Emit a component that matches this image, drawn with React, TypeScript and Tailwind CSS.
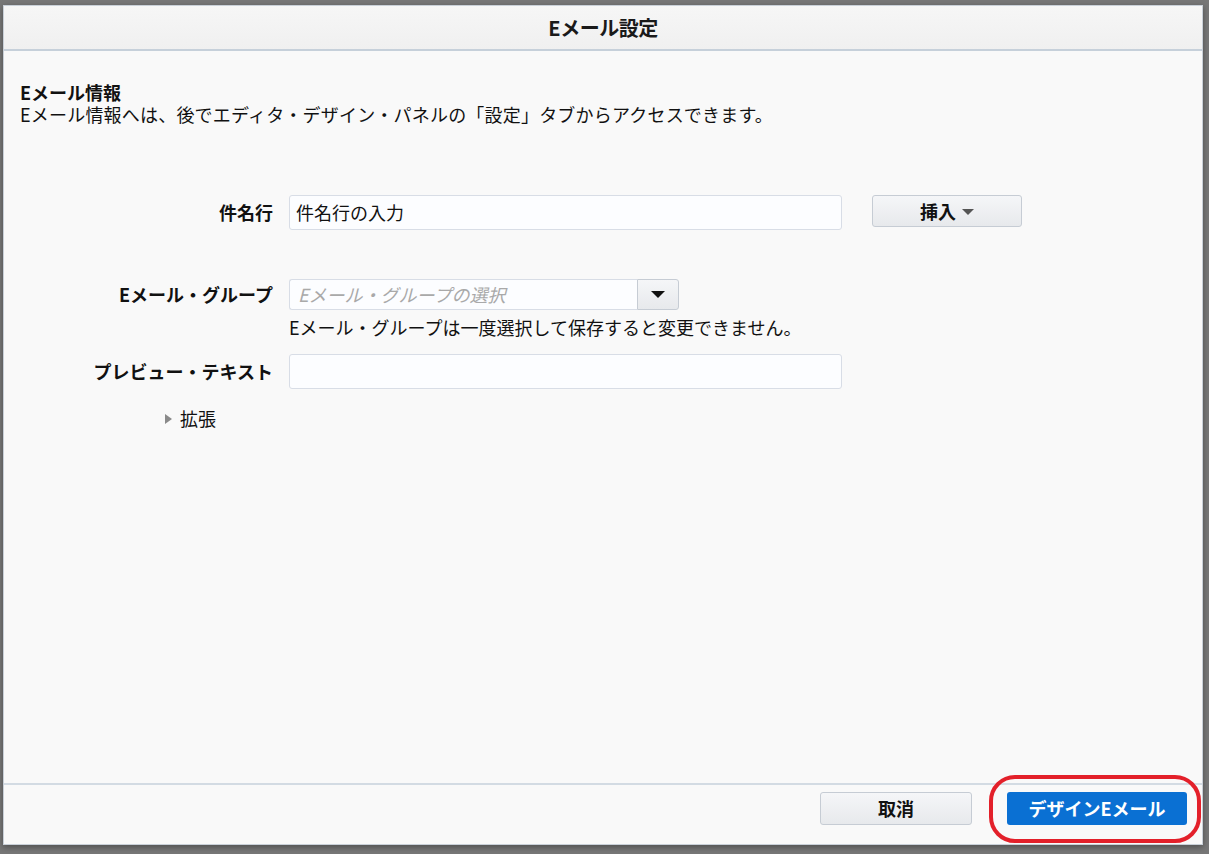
import React from 'react';

const font = "font-['Noto_Sans_CJK_JP','Noto_Sans',sans-serif]";

const GreyButton: React.FC<{ className?: string; children: React.ReactNode }> = ({ className = '', children }) => (
  <button
    className={`flex items-center justify-center rounded-[3px] border border-[#c6ccd4] bg-gradient-to-b from-[#f5f6f8] to-[#e7e9ec] text-[18px] font-bold text-[#111] ${className}`}
  >
    {children}
  </button>
);

const App: React.FC = () => {
  return (
    <div className={`${font} flex h-[854px] w-[1209px] bg-[#777777] pl-[3px] pt-[5px] text-[#111]`}>
      <div className="relative flex h-[840px] w-[1200px] flex-col border border-[#c9d0d8] bg-[#f9f9f9] shadow-[0_2px_6px_rgba(0,0,0,0.35)]">
        {/* Header */}
        <div className="flex h-[45px] shrink-0 items-center justify-center border-b-2 border-[#c6d0da] bg-gradient-to-b from-[#f6f6f6] to-[#f0f0f0]">
          <h1 className="text-[20px] font-bold tracking-tight text-[#1a1a1a]">Eメール設定</h1>
        </div>

        {/* Body */}
        <div className="flex-1 px-[16px] pt-[31px]">
          <h2 className="text-[18px] font-bold leading-[21px]">Eメール情報</h2>
          <p className="text-[18px] leading-[22px] tracking-[0.2px]">
            Eメール情報へは、後でエディタ・デザイン・パネルの「設定」タブからアクセスできます。
          </p>

          <div className="mt-[70px] flex flex-col">
            {/* Subject */}
            <div className="flex items-start">
              <label className="flex h-[35px] w-[253px] items-center justify-end text-[18px] font-bold">件名行</label>
              <div className="ml-[16px] flex h-[35px] w-[553px] items-center rounded-[3px] border border-[#d8dde6] bg-[#fcfdff] px-[6px] text-[18px]">
                件名行の入力
              </div>
              <GreyButton className="ml-[30px] h-[32px] w-[150px] gap-[6px]">
                <span>挿入</span>
                <span className="mt-[1px] h-0 w-0 border-x-[6px] border-t-[6px] border-x-transparent border-t-[#555]" />
              </GreyButton>
            </div>

            {/* Group */}
            <div className="mt-[49px] flex items-start">
              <label className="flex h-[31px] w-[253px] items-center justify-end text-[18px] font-bold">Eメール・グループ</label>
              <div className="ml-[16px] flex flex-col">
                <div className="flex h-[31px]">
                  <div className="flex w-[348px] items-center rounded-l-[3px] border border-r-0 border-[#d8dde6] bg-[#fcfdff] px-[8px] text-[18px] italic text-[#a9a9a9]">
                    Eメール・グループの選択
                  </div>
                  <div className="flex w-[42px] items-center justify-center rounded-r-[3px] border border-[#c6ccd4] bg-gradient-to-b from-[#f5f6f8] to-[#e7e9ec]">
                    <span className="h-0 w-0 border-x-[7px] border-t-[7px] border-x-transparent border-t-[#111]" />
                  </div>
                </div>
                <p className="mt-[6px] text-[18px] leading-[22px]">Eメール・グループは一度選択して保存すると変更できません。</p>
              </div>
            </div>

            {/* Preview text */}
            <div className="mt-[16px] flex items-start">
              <label className="flex h-[35px] w-[253px] items-center justify-end text-[18px] font-bold">プレビュー・テキスト</label>
              <div className="ml-[16px] h-[35px] w-[553px] rounded-[3px] border border-[#d8dde6] bg-[#fcfdff]" />
            </div>

            {/* Expand */}
            <div className="ml-[145px] mt-[16px] flex items-center gap-[8px] text-[18px]">
              <span className="h-0 w-0 border-y-[5px] border-l-[7px] border-y-transparent border-l-[#8a8a8a]" />
              <span>拡張</span>
            </div>
          </div>
        </div>

        {/* Footer */}
        <div className="flex h-[61px] shrink-0 items-start justify-end gap-[35px] border-t-2 border-[#d3dbe3] pr-[15px] pt-[7px]">
          <GreyButton className="h-[33px] w-[152px]">取消</GreyButton>
          <button className="flex h-[33px] w-[180px] items-center justify-center rounded-[3px] bg-[#0a70d3] text-[18px] font-bold text-white">
            デザインEメール
          </button>
        </div>

        {/* Annotation */}
        <div className="pointer-events-none absolute left-[985px] top-[769px] h-[68px] w-[212px] rounded-[26px] border-4 border-[#e3202a]" />
      </div>
    </div>
  );
};

export default App;
